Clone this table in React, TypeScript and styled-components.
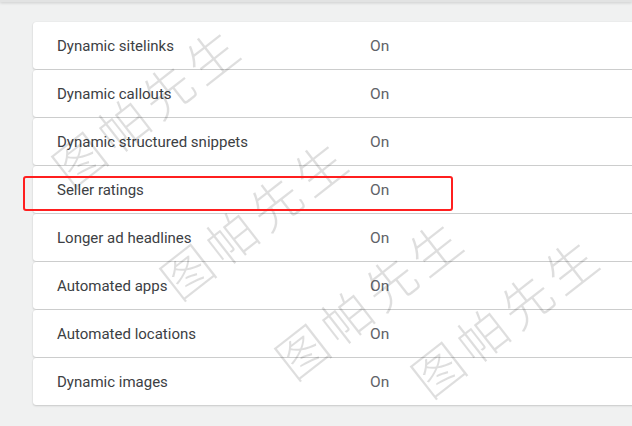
import React from 'react';
import styled, { createGlobalStyle } from 'styled-components';

const GlobalStyle = createGlobalStyle`
  html, body {
    margin: 0;
    padding: 0;
    background: #f0f1f1;
    font-family: Roboto, "Liberation Sans", Arial, sans-serif;
  }
`;

const Page = styled.div`
  position: relative;
  width: 632px;
  height: 426px;
  overflow: hidden;
  background: #f0f1f1;
`;

const TopBar = styled.div`
  height: 2px;
  background: #e2e3e3;
  box-shadow: 0 1px 3px rgba(0, 0, 0, 0.18);
`;

const List = styled.div`
  display: flex;
  flex-direction: column;
  gap: 1px;
  padding: 20px 0 0 33px;
`;

const Row = styled.div`
  display: flex;
  align-items: center;
  width: 700px;
  height: 47px;
  padding-left: 24px;
  box-sizing: border-box;
  background: #fff;
  border-radius: 3px 0 0 3px;
  box-shadow: 0 1px 2px rgba(0, 0, 0, 0.16), 0 0 1px rgba(0, 0, 0, 0.12);
`;

const Label = styled.div`
  width: 313px;
  font-size: 15px;
  color: #3c4043;
`;

const Status = styled.div`
  font-size: 15.5px;
  color: #5f6368;
`;

const Highlight = styled.div`
  position: absolute;
  left: 23px;
  top: 176px;
  width: 426px;
  height: 31px;
  border: 2px solid #ff1f1f;
  border-radius: 3px;
`;

const Watermark = styled.div<{ x: number; y: number }>`
  position: absolute;
  left: ${p => p.x}px;
  top: ${p => p.y}px;
  transform: translate(-50%, -50%) rotate(-38deg);
  font-family: "Noto Sans CJK SC", sans-serif;
  font-weight: 300;
  font-size: 50px;
  letter-spacing: 6px;
  line-height: 1;
  white-space: nowrap;
  color: rgba(0, 0, 0, 0.13);
  pointer-events: none;
`;

const items = [
  'Dynamic sitelinks',
  'Dynamic callouts',
  'Dynamic structured snippets',
  'Seller ratings',
  'Longer ad headlines',
  'Automated apps',
  'Automated locations',
  'Dynamic images',
];

const marks = [
  { x: 146, y: 104 },
  { x: 254, y: 216 },
  { x: 369, y: 296 },
  { x: 505, y: 314 },
];

const App: React.FC = () => (
  <Page>
    <GlobalStyle />
    <TopBar />
    <List>
      {items.map(name => (
        <Row key={name}>
          <Label>{name}</Label>
          <Status>On</Status>
        </Row>
      ))}
    </List>
    {marks.map((m, i) => (
      <Watermark key={i} x={m.x} y={m.y}>图帕先生</Watermark>
    ))}
    <Highlight />
  </Page>
);

export default App;
